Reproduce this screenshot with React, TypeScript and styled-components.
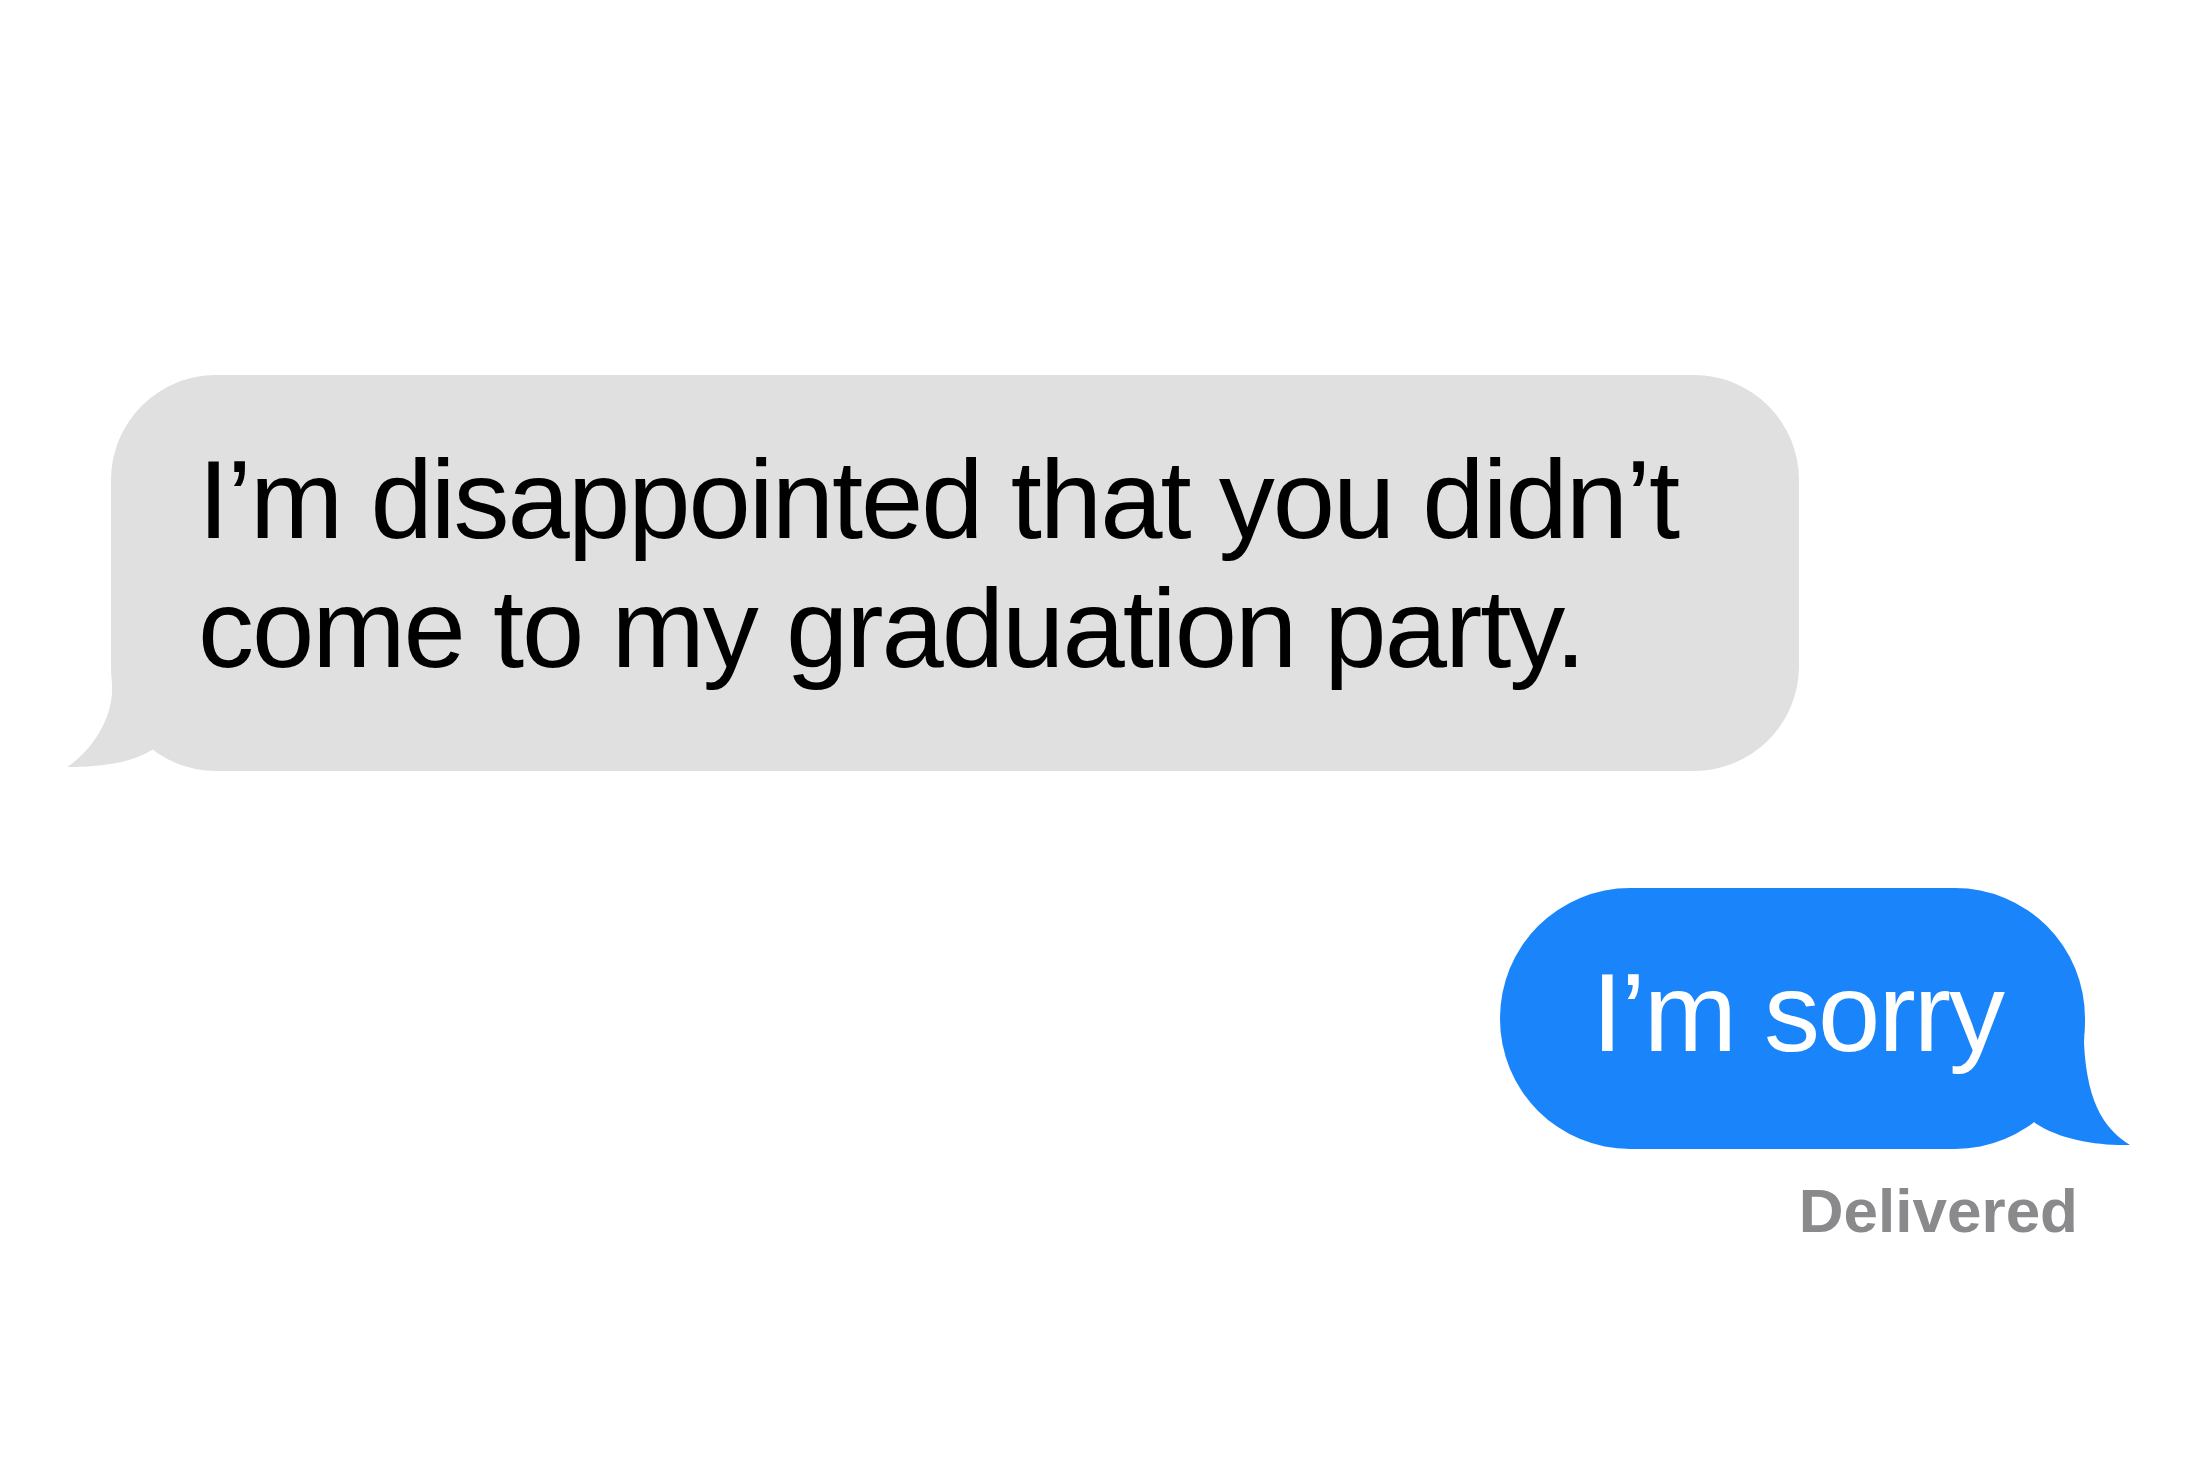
import * as React from 'react';
import styled, { createGlobalStyle } from 'styled-components';

const GlobalStyle = createGlobalStyle`
  html, body {
    margin: 0;
    padding: 0;
    background: #ffffff;
  }
  body {
    font-family: "Liberation Sans", Arial, Helvetica, sans-serif;
  }
`;

const GRAY = '#e0e0e0';
const BLUE = '#1a85fb';

const Page = styled.div`
  width: 2203px;
  height: 1469px;
  box-sizing: border-box;
  padding: 375px 118px 0 111px;
  display: flex;
  flex-direction: column;
  background: #ffffff;
`;

const Bubble = styled.div<{ $sent?: boolean }>`
  position: relative;
  align-self: ${({ $sent }) => ($sent ? 'flex-end' : 'flex-start')};
  margin-top: ${({ $sent }) => ($sent ? '117px' : '0')};
  padding: ${({ $sent }) => ($sent ? '60px 82px 72px 92px' : '60px 121px 78px 87px')};
  border-radius: ${({ $sent }) => ($sent ? '130px' : '105px')};
  background: ${({ $sent }) => ($sent ? BLUE : GRAY)};
  color: ${({ $sent }) => ($sent ? '#ffffff' : '#000000')};
  font-size: 112px;
  line-height: 129px;
  letter-spacing: -2px;
  white-space: nowrap;
`;

const Line = styled.div`
  display: block;
`;

const Tail = styled.svg<{ $left: number; $top: number }>`
  position: absolute;
  left: ${({ $left }) => $left}px;
  top: ${({ $top }) => $top}px;
  overflow: visible;
  pointer-events: none;
`;

const Status = styled.div`
  align-self: flex-end;
  margin-top: 31px;
  margin-right: 7px;
  font-size: 62px;
  line-height: 62px;
  font-weight: 700;
  color: #8a8a8d;
`;

// tail drawn in the bubble's own coordinates, so viewBox == placement box
const ReceivedTail: React.FC = () => (
  <Tail $left={-50} $top={285} width={160} height={115} viewBox="-50 285 160 115">
    <path
      d="M0,291 L1,310 C3,345 -22,378 -44,392 C-10,392 20,388 41,375 L60,330 Z"
      fill={GRAY}
    />
  </Tail>
);

const SentTail: React.FC = () => (
  <Tail $left={490} $top={125} width={150} height={140} viewBox="490 125 150 140">
    <path
      d="M585,131 L584,155 C587,220 608,243 630,257 C600,258 560,252 535,235 L500,180 Z"
      fill={BLUE}
    />
  </Tail>
);

export default function App() {
  return (
    <>
      <GlobalStyle />
      <Page>
        <Bubble>
          <ReceivedTail />
          <Line>I’m disappointed that you didn’t</Line>
          <Line>come to my graduation party.</Line>
        </Bubble>
        <Bubble $sent>
          <SentTail />
          <Line>I’m sorry</Line>
        </Bubble>
        <Status>Delivered</Status>
      </Page>
    </>
  );
}
